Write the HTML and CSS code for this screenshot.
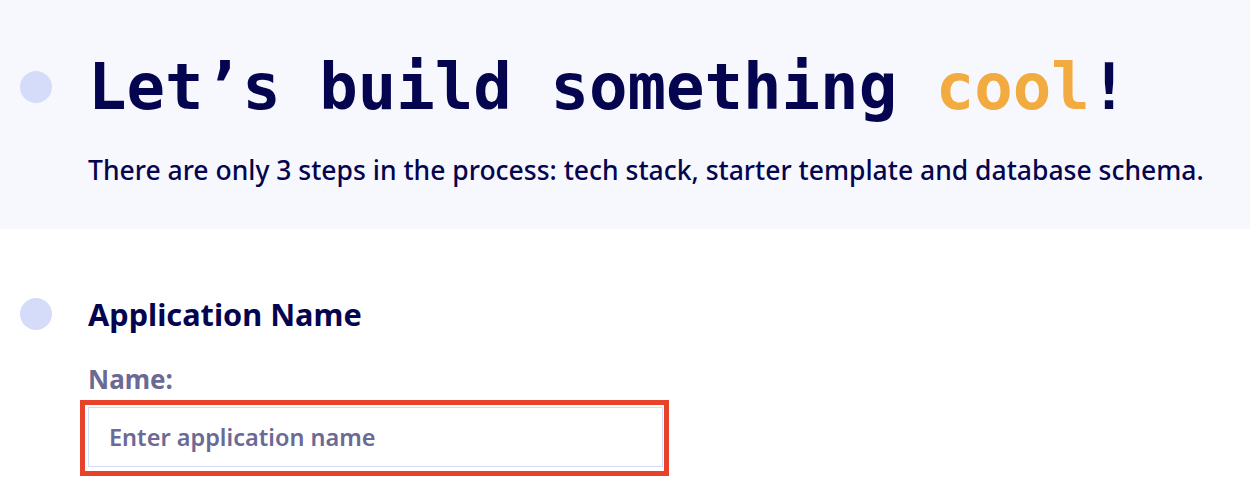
FILE: index.html
```html
<!DOCTYPE html>
<html>
<head>
<meta charset="utf-8">
<link rel="stylesheet" href="styles.css">
</head>
<body>
<header class="hero">
  <div class="row">
    <span class="dot"></span>
    <h1 class="title">Let’s build something <span class="accent">cool</span>!</h1>
  </div>
  <p class="lead">There are only 3 steps in the process: tech stack, starter template and database schema.</p>
</header>
<section class="section">
  <div class="row">
    <span class="dot"></span>
    <h2 class="section-title">Application Name</h2>
  </div>
  <label class="label" for="app">Name:</label>
  <div class="highlight">
    <input id="app" class="input" type="text" placeholder="Enter application name">
  </div>
</section>
</body>
</html>
```
FILE: styles.css
```css
* { box-sizing: border-box; }
body {
  margin: 0;
  background: #ffffff;
  font-family: "Noto Sans", "Lato", sans-serif;
  color: #05044f;
}
.hero {
  background: #f7f8fd;
  height: 229px;
  padding: 47px 0 0 20px;
}
.row {
  display: flex;
  align-items: center;
  gap: 36px;
}
.dot {
  width: 32px;
  height: 32px;
  border-radius: 50%;
  background: #d5dcf9;
  flex: none;
}
.title {
  margin: 0;
  font-family: "DejaVu Sans Mono", "Liberation Mono", monospace;
  font-weight: bold;
  font-size: 64px;
  line-height: 80px;
  color: #05044f;
}
.accent { color: #f2ab40; }
.lead {
  margin: 26px 0 0 68px;
  font-size: 26.5px;
  line-height: 34px;
  font-weight: 500;
  color: #05044f;
}
.section {
  padding: 65px 0 0 20px;
}
.section-title {
  margin: 0;
  font-size: 30.7px;
  font-weight: bold;
  line-height: 40px;
}
.label {
  display: block;
  margin: 29px 0 0 68px;
  font-size: 26px;
  line-height: 32px;
  font-weight: bold;
  color: #6b6a95;
}
.highlight {
  margin: 5px 0 0 60px;
  width: 589px;
  border: 5px solid #e8432a;
  padding: 2px 1px 4px 3px;
}
.input {
  display: block;
  width: 100%;
  height: 60px;
  border: 1px solid #d5dcf9;
  padding: 0 20px;
  font-family: "Noto Sans", "Lato", sans-serif;
  font-size: 23.5px;
  font-weight: 600;
  color: #6b6a95;
  outline: none;
}
.input::placeholder { color: #6b6a95; opacity: 1; }
```
